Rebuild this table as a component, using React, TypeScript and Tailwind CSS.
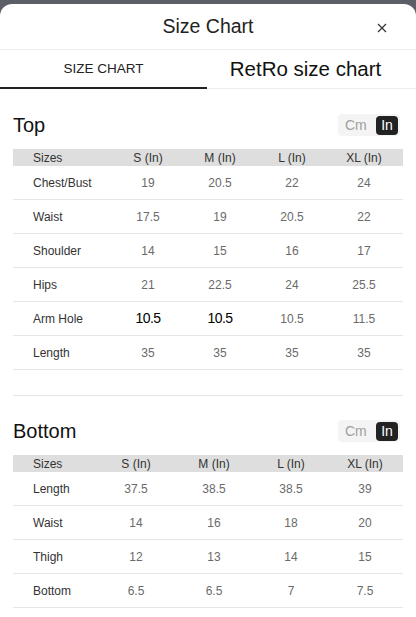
import React from 'react';

type Row = { label: string; values: string[]; bold?: number[] };

const topRows: Row[] = [
  { label: 'Chest/Bust', values: ['19', '20.5', '22', '24'] },
  { label: 'Waist', values: ['17.5', '19', '20.5', '22'] },
  { label: 'Shoulder', values: ['14', '15', '16', '17'] },
  { label: 'Hips', values: ['21', '22.5', '24', '25.5'] },
  { label: 'Arm Hole', values: ['10.5', '10.5', '10.5', '11.5'], bold: [0, 1] },
  { label: 'Length', values: ['35', '35', '35', '35'] },
];

const bottomRows: Row[] = [
  { label: 'Length', values: ['37.5', '38.5', '38.5', '39'] },
  { label: 'Waist', values: ['14', '16', '18', '20'] },
  { label: 'Thigh', values: ['12', '13', '14', '15'] },
  { label: 'Bottom', values: ['6.5', '6.5', '7', '7.5'] },
];

const heads = ['S (In)', 'M (In)', 'L (In)', 'XL (In)'];

const UnitToggle = () => (
  <div className="flex items-center h-[22px] w-[62px] rounded-[4px] bg-[#f4f4f4] pl-[7px] pr-[2px]">
    <span className="text-[14px] text-[#a0a0a0] leading-none">Cm</span>
    <span className="ml-auto flex items-center justify-center h-[19px] w-[22px] rounded-[4px] bg-[#222] text-white text-[14px] leading-none">
      In
    </span>
  </div>
);

const SizeTable = ({ rows, cols }: { rows: Row[]; cols: string }) => (
  <div className="mx-[13px]">
    <div className={`grid ${cols} h-[17px] items-center bg-[#dedede] text-[12px] text-[#333]`}>
      <span className="pl-[20px]">Sizes</span>
      {heads.map((h) => (
        <span key={h} className="text-center">{h}</span>
      ))}
    </div>
    {rows.map((r) => (
      <div key={r.label} className={`grid ${cols} h-[34px] items-center border-b border-[#e6e6e6]`}>
        <span className="pl-[20px] text-[12px] text-[#333]">{r.label}</span>
        {r.values.map((v, i) =>
          r.bold && r.bold.includes(i) ? (
            <span key={i} className="text-center text-[14px] text-black tracking-[-0.5px]">{v}</span>
          ) : (
            <span key={i} className="text-center text-[12px] text-[#6a6a6a]">{v}</span>
          )
        )}
      </div>
    ))}
  </div>
);

export default function App() {
  return (
    <div className="w-[416px] h-[617px] overflow-hidden bg-[#5c5f68] pt-[4px]" style={{ fontFamily: '"Liberation Sans", Arial, sans-serif' }}>
      <div className="h-full bg-white rounded-t-[12px]">
        <div className="relative flex items-center justify-center h-[46px] border-b border-[#ececec]">
          <h1 className="text-[19.5px] text-[#222]">Size Chart</h1>
          <svg className="absolute right-[29px] top-[19px]" width="10" height="10" viewBox="0 0 10 10">
            <path d="M1 1L9 9M9 1L1 9" stroke="#333" strokeWidth="1.2" />
          </svg>
        </div>
        <div className="flex h-[39px]">
          <div className="w-[207px] shrink-0 flex items-center justify-center border-b-2 border-[#222] text-[13.5px] text-[#222] pt-[1px]">
            SIZE CHART
          </div>
          <div className="flex-1 flex items-center justify-center border-b border-[#ececec] text-[20.5px] text-[#111] pt-[1px] pr-[12px]">
            RetRo size chart
          </div>
        </div>

        <div className="pt-[25px]">
          <div className="flex items-center justify-between mx-[13px] mr-[16px] h-[22px] mb-[13px]">
            <h2 className="text-[20px] text-[#111]">Top</h2>
            <UnitToggle />
          </div>
          <SizeTable rows={topRows} cols="grid-cols-[99px_72px_72px_72px_72px]" />
        </div>

        <div className="mx-[13px] mt-[25px] border-t border-[#e6e6e6]" />

        <div className="pt-[24px]">
          <div className="flex items-center justify-between mx-[13px] mr-[16px] h-[22px] mb-[13px]">
            <h2 className="text-[20px] text-[#111]">Bottom</h2>
            <UnitToggle />
          </div>
          <SizeTable rows={bottomRows} cols="grid-cols-[83px_80px_76px_78px_70px]" />
        </div>
      </div>
    </div>
  );
}
